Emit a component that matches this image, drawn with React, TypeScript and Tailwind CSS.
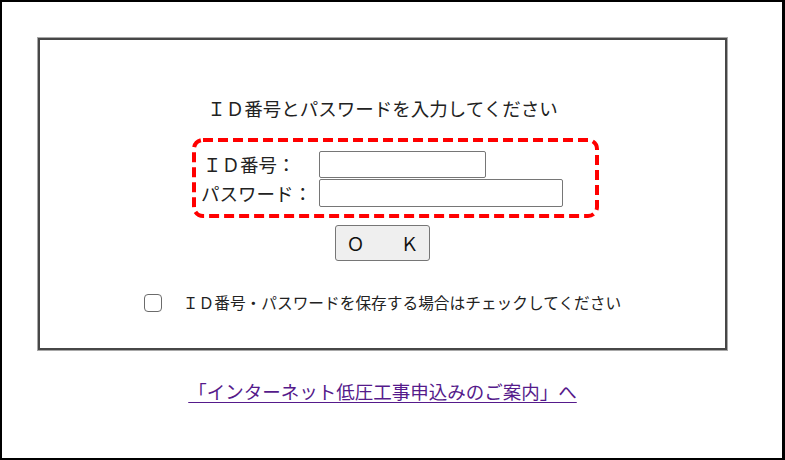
import React, { useState } from "react";

const jp = { fontFamily: '"Noto Sans CJK JP", "Noto Sans", sans-serif' };

const LoginBox: React.FC = () => {
  const [saveId, setSaveId] = useState(false);

  return (
    <div className="ml-[36px] mt-[36px] w-[689px] h-[312px] border-2 border-[#474747] shadow-[0_0_0_1px_#a8a8a8] flex flex-col">
      {/* Heading */}
      <p className="mt-[55px] text-center text-[18.5px] leading-[26px] text-[#222]">
        ＩＤ番号とパスワードを入力してください
      </p>

      {/* Highlighted inputs (red dashed frame drawn over) */}
      <div className="relative ml-[152px] mt-[17px] w-[407px] h-[80px] pt-[13px] pl-[4px]">
        <svg className="absolute inset-0 pointer-events-none" width="407" height="80">
          <rect
            x="2"
            y="2"
            width="403"
            height="76"
            rx="9"
            fill="none"
            stroke="#ff0000"
            strokeWidth="4"
            strokeDasharray="10 5"
          />
        </svg>
        <div className="flex items-center h-[27px]">
          <span className="w-[123px] pl-[7px] text-[18.5px] leading-[27px] text-[#222]">ＩＤ番号：</span>
          <input
            type="text"
            className="w-[167px] h-[27px] border border-[#767676] rounded-[2px] bg-white outline-none"
          />
        </div>
        <div className="flex items-center h-[28px] mt-px">
          <span className="w-[123px] pl-[5px] text-[18.5px] leading-[28px] text-[#222]">パスワード：</span>
          <input
            type="password"
            className="w-[244px] h-[28px] border border-[#767676] rounded-[2px] bg-white outline-none"
          />
        </div>
      </div>

      {/* OK */}
      <div className="flex justify-center mt-[7px]">
        <button className="w-[95px] h-[36px] border border-[#767676] rounded-[3px] bg-[#efefef] text-[18px] leading-none text-[#111]">
          Ｏ　　Ｋ
        </button>
      </div>

      {/* Save checkbox */}
      <label className="flex items-center justify-center mt-[32px] h-[20px] cursor-pointer">
        <input
          type="checkbox"
          checked={saveId}
          onChange={() => setSaveId(!saveId)}
          className="appearance-none w-[18px] h-[18px] border-[1.5px] border-[#6b6b6b] rounded-[4px] bg-white"
        />
        <span className="ml-[21px] text-[15.7px] leading-[20px] text-[#222]">
          ＩＤ番号・パスワードを保存する場合はチェックしてください
        </span>
      </label>
    </div>
  );
};

export default function App() {
  return (
    <div
      className="w-[785px] h-[460px] bg-white border-2 border-r-[3px] border-black overflow-hidden"
      style={jp}
    >
      <LoginBox />

      {/* Link */}
      <div className="ml-[36px] w-[689px] mt-[28px] text-center">
        <a href="#" className="text-[18.5px] leading-[26px] text-[#551a8b] underline underline-offset-[3px]">
          「インターネット低圧工事申込みのご案内」へ
        </a>
      </div>
    </div>
  );
}
